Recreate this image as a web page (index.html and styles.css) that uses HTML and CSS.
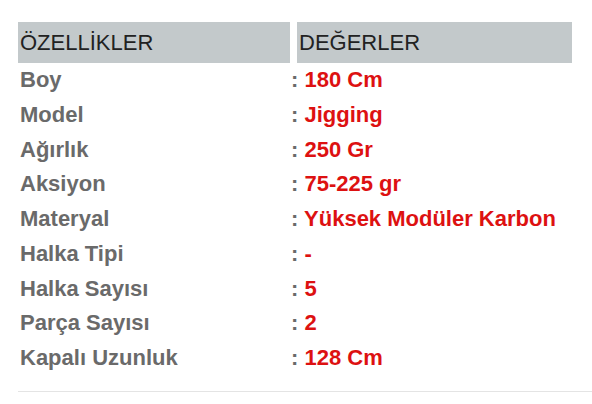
FILE: index.html
```html
<!DOCTYPE html>
<html lang="tr">
<head>
<meta charset="utf-8">
<link rel="stylesheet" href="styles.css">
</head>
<body>
<div class="specs">
  <div class="head">
    <div class="hcell hleft">ÖZELLİKLER</div>
    <div class="hcell hright">DEĞERLER</div>
  </div>
  <div class="rows">
    <div class="row"><span class="lbl">Boy</span><span class="val"><span class="colon">:</span> 180 Cm</span></div>
    <div class="row"><span class="lbl">Model</span><span class="val"><span class="colon">:</span> Jigging</span></div>
    <div class="row"><span class="lbl">Ağırlık</span><span class="val"><span class="colon">:</span> 250 Gr</span></div>
    <div class="row"><span class="lbl">Aksiyon</span><span class="val"><span class="colon">:</span> 75-225 gr</span></div>
    <div class="row"><span class="lbl">Materyal</span><span class="val"><span class="colon">:</span> Yüksek Modüler Karbon</span></div>
    <div class="row"><span class="lbl">Halka Tipi</span><span class="val"><span class="colon">:</span> -</span></div>
    <div class="row"><span class="lbl">Halka Sayısı</span><span class="val"><span class="colon">:</span> 5</span></div>
    <div class="row"><span class="lbl">Parça Sayısı</span><span class="val"><span class="colon">:</span> 2</span></div>
    <div class="row"><span class="lbl">Kapalı Uzunluk</span><span class="val"><span class="colon">:</span> 128 Cm</span></div>
  </div>
  <div class="rule"></div>
</div>
</body>
</html>
```

FILE: styles.css
```css
html, body {
  margin: 0;
  padding: 0;
  background: #ffffff;
}
body {
  font-family: "Liberation Sans", Arial, sans-serif;
}
.specs {
  padding: 22px 0 0 18px;
}
.head {
  display: flex;
  gap: 7px;
  width: 554px;
}
.hcell {
  background: #c3c9cb;
  height: 41px;
  line-height: 42px;
  font-size: 22px;
  color: #222222;
  padding-left: 2px;
  box-sizing: border-box;
}
.hleft {
  width: 272px;
}
.hright {
  width: 275px;
}
.rows {
  display: flex;
  flex-direction: column;
}
.row {
  display: grid;
  grid-template-columns: 271px auto;
  height: 34.75px;
  line-height: 34px;
  font-size: 22px;
  font-weight: bold;
  padding-left: 2px;
}
.lbl {
  color: #6a6a6a;
}
.val {
  color: #dd1111;
}
.colon {
  color: #6a6a6a;
}
.rule {
  margin-top: 15px;
  height: 1px;
  background: #e4e4e4;
}
```
